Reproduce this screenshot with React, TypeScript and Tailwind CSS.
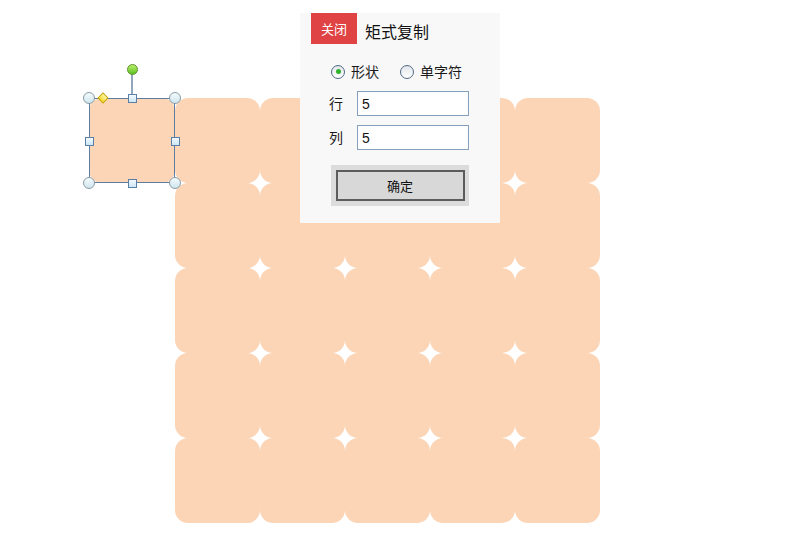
const font = { fontFamily: '"Noto Sans CJK SC", "Noto Sans", sans-serif' }

function Handle({ kind, x, y }: { kind: "circle" | "square"; x: number; y: number }) {
  if (kind === "circle") {
    return (
      <div
        className="absolute w-[12px] h-[12px] rounded-full border border-[#8a9aa6] bg-gradient-to-b from-[#f4fbfd] to-[#cfe6ee]"
        style={{ left: x - 6, top: y - 6 }}
      />
    )
  }
  return (
    <div
      className="absolute w-[9px] h-[9px] border border-[#5b7fa6] bg-gradient-to-b from-[#f2f9fd] to-[#cbe6f5]"
      style={{ left: x - 4.5, top: y - 4.5 }}
    />
  )
}

function Radio({ checked, label }: { checked?: boolean; label: string }) {
  return (
    <label className="flex items-center gap-[6px] text-[14px] text-[#1a1a1a]">
      <span className="w-[14px] h-[14px] rounded-full border border-[#4f6a86] bg-gradient-to-b from-[#e3e6ea] to-[#ffffff] flex items-center justify-center">
        {checked && <span className="w-[5px] h-[5px] rounded-full bg-[#2db32d]" />}
      </span>
      {label}
    </label>
  )
}

export default function App() {
  const tiles = Array.from({ length: 25 })
  return (
    <div className="relative w-[800px] h-[542px] bg-white overflow-hidden" style={font}>
      {/* shape grid */}
      <div className="pl-[175px] pt-[98px]">
        <div className="grid grid-cols-[repeat(5,85px)]">
          {tiles.map((_, i) => (
            <div key={i} className="h-[85px] rounded-[13px] bg-[#fbd5b6]" />
          ))}
        </div>
      </div>

      {/* selected shape */}
      <div className="absolute left-[89px] top-[98px] w-[86px] h-[85px]">
        <div className="absolute inset-0 rounded-[13px] bg-[#fbd5b6]" />
        <div className="absolute inset-0 border border-[#5d7ea3]" />
      </div>
      <div className="absolute left-[131px] top-[74px] w-[2px] h-[20px] bg-[#8fa6bd]" />
      <div
        className="absolute w-[11px] h-[11px] rounded-full border border-[#5d8f2a] bg-gradient-to-b from-[#b8f06a] to-[#5cc21c]"
        style={{ left: 126.5, top: 63.5 }}
      />
      <Handle kind="circle" x={89} y={98} />
      <Handle kind="circle" x={175} y={98} />
      <Handle kind="circle" x={89} y={183} />
      <Handle kind="circle" x={175} y={183} />
      <Handle kind="square" x={132} y={98} />
      <Handle kind="square" x={132} y={183} />
      <Handle kind="square" x={89} y={141} />
      <Handle kind="square" x={175} y={141} />
      <div
        className="absolute w-[8px] h-[8px] rotate-45 border border-[#c9a800] bg-gradient-to-b from-[#fff7a0] to-[#f5d800]"
        style={{ left: 99, top: 94 }}
      />

      {/* dialog */}
      <div className="absolute left-[300px] top-[13px] w-[200px] h-[210px] bg-[#f8f8f8]">
        <div className="flex items-center pl-[11px]">
          <button className="w-[46px] h-[31px] bg-[#e04343] text-white text-[13px]">关闭</button>
          <span className="ml-[8px] mt-[5px] text-[16px] text-[#111]">矩式复制</span>
        </div>
        <div className="flex items-center gap-[21px] pl-[31px] mt-[17px]">
          <Radio checked label="形状" />
          <Radio label="单字符" />
        </div>
        <div className="flex flex-col gap-[9px] mt-[9px] pl-[29px]">
          {["行", "列"].map((l) => (
            <div key={l} className="flex items-center">
              <span className="w-[28px] text-[14px] text-[#1a1a1a]">{l}</span>
              <input
                readOnly
                value="5"
                className="w-[112px] h-[25px] border border-[#859fbd] bg-white pl-[4px] text-[14px] text-[#111] outline-none"
                style={{ fontFamily: '"Liberation Sans", sans-serif' }}
              />
            </div>
          ))}
        </div>
        <div className="ml-[31px] mt-[15px] w-[138px] h-[41px] bg-[#dcdcdc] flex items-center justify-center">
          <button className="w-[129px] h-[31px] border-2 border-[#5c5c5c] bg-[#d8d8d8] text-[13px] text-[#111]">
            确定
          </button>
        </div>
      </div>
    </div>
  )
}
